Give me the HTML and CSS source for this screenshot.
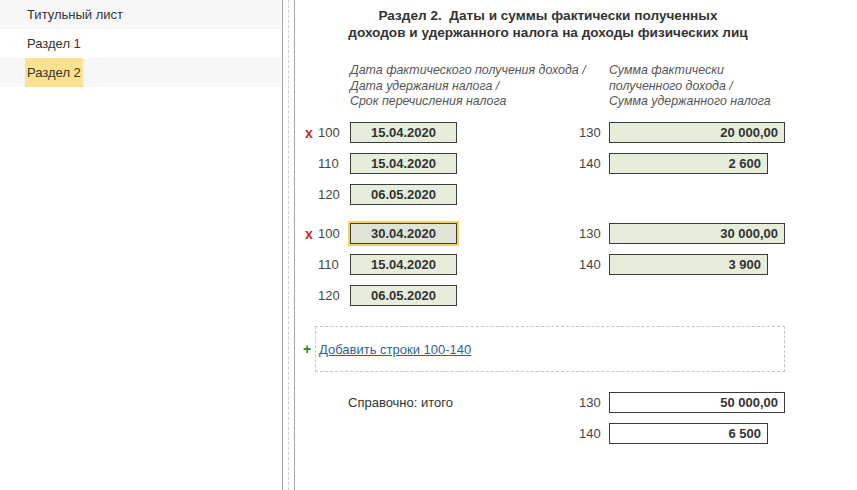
FILE: index.html
```html
<!DOCTYPE html>
<html lang="ru">
<head>
<meta charset="utf-8">
<title>Раздел 2</title>
<link rel="stylesheet" href="styles.css">
</head>
<body>
<div class="app">
  <aside class="sidebar">
    <div class="nav-item alt">Титульный лист</div>
    <div class="nav-item">Раздел 1</div>
    <div class="nav-item alt"><span class="current">Раздел 2</span></div>
  </aside>
  <div class="splitter"></div>
  <main class="main">
    <div class="form">
      <h1 class="title">Раздел 2.&nbsp; Даты и суммы фактически полученных<br>доходов и удержанного налога на доходы физических лиц</h1>
      <div class="heads">
        <div class="head-left">Дата фактического получения дохода /<br>Дата удержания налога /<br>Срок перечисления налога</div>
        <div class="head-right">Сумма фактически<br>полученного дохода /<br>Сумма удержанного налога</div>
      </div>

      <div class="group">
        <div class="row">
          <span class="mark">x</span><span class="code">100</span><span class="field date">15.04.2020</span>
          <span class="gap"></span><span class="code">130</span><span class="field sum wide">20 000,00</span>
        </div>
        <div class="row">
          <span class="mark"></span><span class="code">110</span><span class="field date">15.04.2020</span>
          <span class="gap"></span><span class="code">140</span><span class="field sum">2 600</span>
        </div>
        <div class="row">
          <span class="mark"></span><span class="code">120</span><span class="field date">06.05.2020</span>
        </div>
      </div>

      <div class="group">
        <div class="row">
          <span class="mark">x</span><span class="code">100</span><span class="field date focused">30.04.2020</span>
          <span class="gap"></span><span class="code">130</span><span class="field sum wide">30 000,00</span>
        </div>
        <div class="row">
          <span class="mark"></span><span class="code">110</span><span class="field date">15.04.2020</span>
          <span class="gap"></span><span class="code">140</span><span class="field sum">3 900</span>
        </div>
        <div class="row">
          <span class="mark"></span><span class="code">120</span><span class="field date">06.05.2020</span>
        </div>
      </div>

      <div class="add-row">
        <span class="plus">+</span>
        <div class="add-box"><a class="add-link" href="#">Добавить строки 100-140</a></div>
      </div>

      <div class="totals">
        <div class="row">
          <span class="total-label">Справочно: итого</span>
          <span class="code">130</span><span class="field sum wide plain">50 000,00</span>
        </div>
        <div class="row">
          <span class="total-label"></span>
          <span class="code">140</span><span class="field sum plain">6 500</span>
        </div>
      </div>
    </div>
  </main>
</div>
</body>
</html>
```
FILE: styles.css
```css
* { box-sizing: border-box; }
html, body {
  margin: 0;
  padding: 0;
  height: 490px;
  overflow: hidden;
  background: #fff;
  font-family: "Liberation Sans", Arial, sans-serif;
  font-size: 13px;
  color: #333;
}
.app {
  display: flex;
  height: 490px;
}
.sidebar {
  width: 283px;
  flex: none;
  border-right: 1px solid #a6a6a6;
}
.nav-item {
  height: 29px;
  line-height: 29px;
  padding-left: 27px;
  color: #333;
  width: 281px;
}
.nav-item.alt { background: #f7f7f7; }
.current {
  display: inline-block;
  background: #fce28e;
  padding: 0 2px;
  margin-left: -2px;
  height: 29px;
}
.splitter {
  width: 11px;
  flex: none;
  display: flex;
  justify-content: center;
}
.splitter::before {
  content: "";
  display: block;
  width: 0;
  height: 100%;
  border-left: 1px dashed #cfcfcf;
}
.main {
  flex: 1;
  border-left: 1px solid #a6a6a6;
  padding-left: 10px;
}
.form {
  width: 486px;
}
.title {
  margin: 7px 0 0 0;
  font-size: 13.6px;
  font-weight: bold;
  line-height: 17px;
  text-align: center;
  color: #333;
  white-space: nowrap;
}
.heads {
  display: flex;
  margin-top: 22px;
  padding-left: 45px;
  font-style: italic;
  font-size: 12.4px;
  color: #555;
  line-height: 15.5px;
}
.head-left { width: 259px; flex: none; }
.head-right { flex: none; }

.group { margin-top: 7px; }
.group + .group { margin-top: 8px; }
.row {
  display: flex;
  align-items: center;
  height: 31px;
}
.mark {
  width: 13px;
  flex: none;
  color: #cc1f1f;
  font-weight: bold;
  font-size: 14px;
  line-height: 1;
  padding-top: 1px;
}
.code {
  width: 32px;
  flex: none;
  color: #444;
}
.gap { width: 122px; flex: none; }
.row .code + .field.sum { margin-left: -2px; }
.field {
  height: 21px;
  line-height: 19px;
  border: 1px solid #3b3b3b;
  background: #e6eedb;
  font-weight: bold;
  color: #333;
  flex: none;
}
.field.date {
  width: 107px;
  text-align: center;
}
.field.sum {
  width: 159px;
  text-align: right;
  padding-right: 6px;
}
.field.sum.wide { width: 176px; }
.field.plain { background: #fff; }
.field.focused {
  background: #dfe4d7;
  box-shadow: 0 0 0 2px #f2d45c;
}

.add-row {
  display: flex;
  margin-top: 15px;
  height: 46px;
}
.plus {
  width: 10px;
  flex: none;
  color: #2a8a1e;
  font-weight: bold;
  font-size: 14px;
  line-height: 46px;
  margin-left: -2px;
  margin-right: 2px;
}
.add-box {
  width: 470px;
  flex: none;
  border: 1px dashed #c4c4c4;
  display: flex;
  align-items: center;
  padding-left: 3px;
  padding-top: 1px;
}
.add-link {
  color: #2b5f9c;
  text-decoration: underline;
}
.totals { margin-top: 15px; }
.total-label {
  width: 274px;
  flex: none;
  padding-left: 43px;
  color: #333;
}
```
